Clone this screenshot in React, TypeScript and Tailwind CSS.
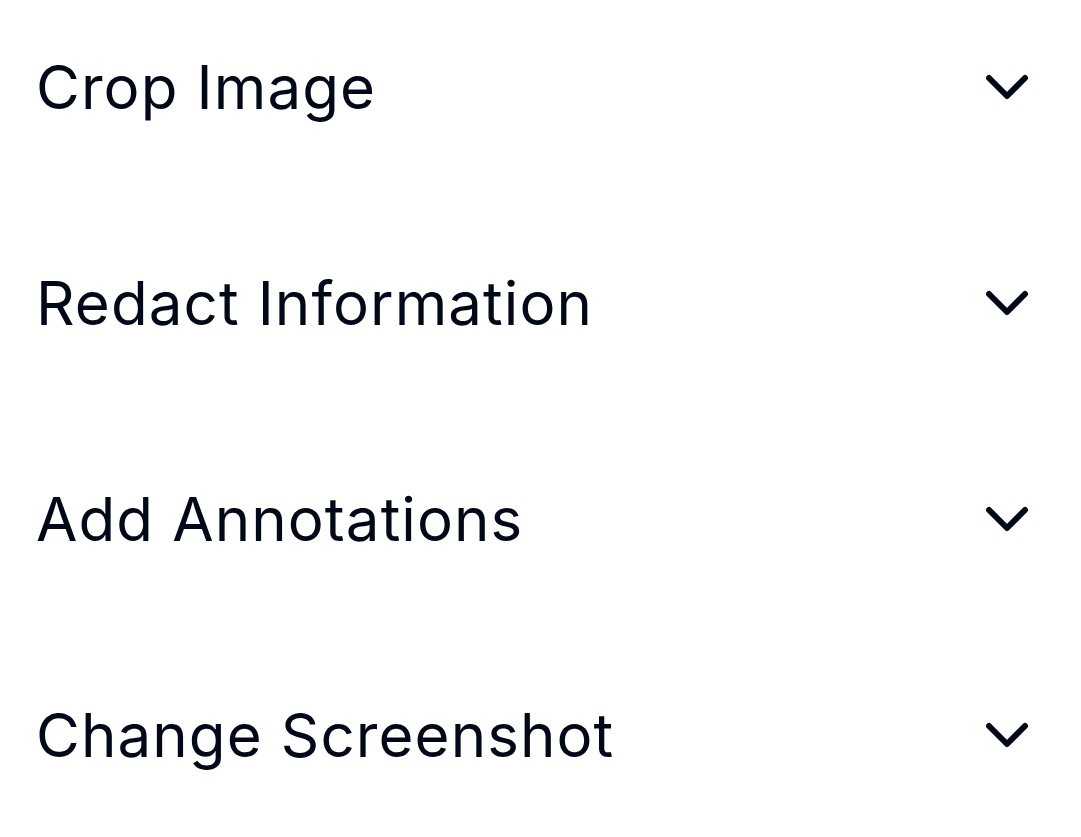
import { ChevronDown } from 'lucide-react';

const items = ['Crop Image', 'Redact Information', 'Add Annotations', 'Change Screenshot'];

export default function App() {
  return (
    <div className="min-h-screen bg-white font-['Inter',sans-serif] text-[#020817]">
      {items.map((label) => (
        <button
          key={label}
          className="flex h-[216px] w-full items-start justify-between px-[36px] pt-[45px] text-left"
        >
          <span className="text-[60px] leading-[84px] font-normal tracking-[1.1px]">{label}</span>
          <span className="flex h-[84px] items-center">
            <ChevronDown size={72} strokeWidth={2} className="mr-[2px] shrink-0" />
          </span>
        </button>
      ))}
    </div>
  );
}
